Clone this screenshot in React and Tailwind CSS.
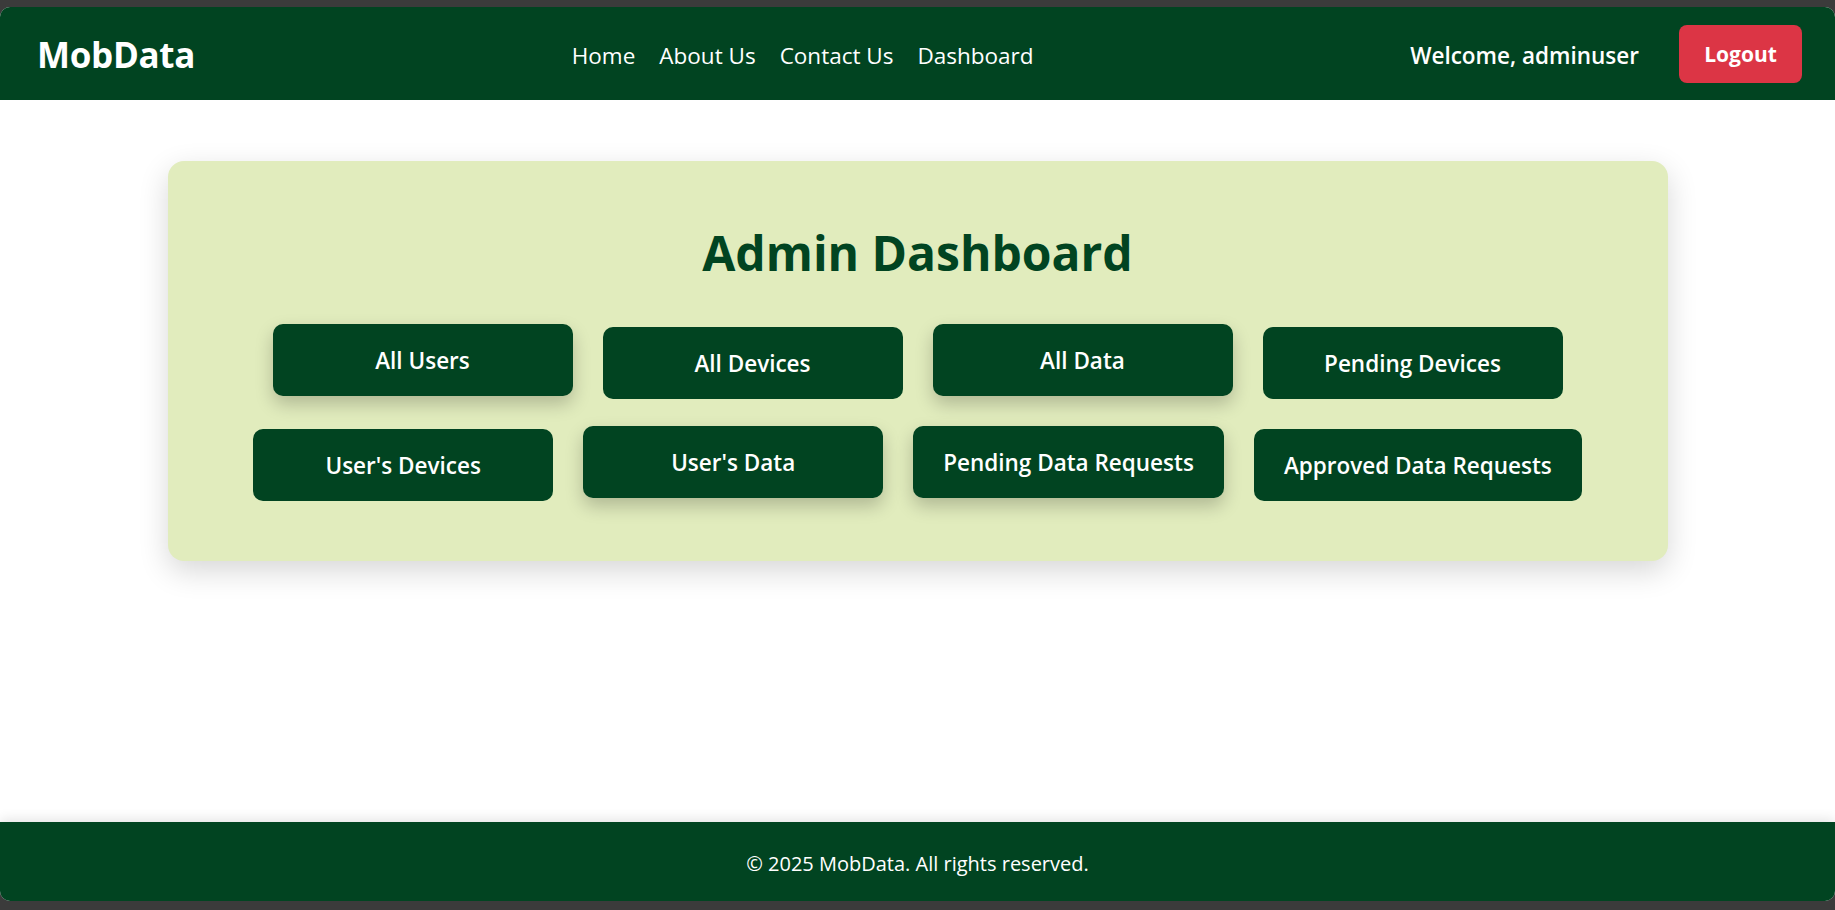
export default function App() {
  const row1 = [
    { t: "All Users", up: true },
    { t: "All Devices", up: false },
    { t: "All Data", up: true },
    { t: "Pending Devices", up: false },
  ];
  const row2 = [
    { t: "User's Devices", up: false },
    { t: "User's Data", up: true },
    { t: "Pending Data Requests", up: true },
    { t: "Approved Data Requests", up: false },
  ];
  const font = { fontFamily: '"Open Sans", "Noto Sans", sans-serif' };
  const Btn = ({ t, up }) => (
    <button
      className={
        "min-w-[300px] h-[72px] px-[30px] pt-[2px] rounded-[10px] bg-[#014421] text-white text-[22.5px] font-semibold flex items-center justify-center " +
        (up ? "-translate-y-[3px] shadow-[0_8px_18px_rgba(0,0,0,0.22)]" : "")
      }
    >
      {t}
    </button>
  );
  return (
    <div className="h-[910px] bg-[#3b3b3b] pt-[7px] pb-[9px] flex flex-col" style={font}>
      <div className="flex-1 flex flex-col bg-white rounded-[10px] overflow-hidden">
        <header className="h-[93px] shrink-0 bg-[#014421] flex items-center justify-between pl-[37px] pr-[33px]">
          <div className="text-white text-[35px] font-bold tracking-[-0.3px] pt-[4px]">MobData</div>
          <nav className="flex items-center gap-[24px] text-white text-[22.5px] pt-[4px]">
            <a>Home</a>
            <a>About Us</a>
            <a>Contact Us</a>
            <a>Dashboard</a>
          </nav>
          <div className="flex items-center gap-[40px]">
            <span className="text-white text-[22.5px] font-semibold pt-[4px]">Welcome, adminuser</span>
            <button className="w-[123px] h-[58px] pt-[2px] rounded-[8px] bg-[#dc3545] text-white text-[21px] font-bold">
              Logout
            </button>
          </div>
        </header>
        <main className="flex-1 pt-[61px]">
          <div className="mx-auto w-[1500px] bg-[#e1ecbd] rounded-[16px] shadow-[0_10px_30px_rgba(0,0,0,0.16)] px-[40px] pt-[63px] pb-[60px]">
            <h1 className="text-center text-[48px] font-bold text-[#014421] leading-[1.2] mb-[45px]">
              Admin Dashboard
            </h1>
            <div className="flex flex-col items-center gap-[30px]">
              <div className="flex justify-center gap-[30px]">
                {row1.map((b) => (
                  <Btn key={b.t} {...b} />
                ))}
              </div>
              <div className="flex justify-center gap-[30px]">
                {row2.map((b) => (
                  <Btn key={b.t} {...b} />
                ))}
              </div>
            </div>
          </div>
        </main>
        <footer className="h-[79px] shrink-0 pt-[4px] bg-[#014421] flex items-center justify-center text-white text-[20px] shadow-[0_-2px_12px_rgba(0,0,0,0.12)]">
          © 2025 MobData. All rights reserved.
        </footer>
      </div>
    </div>
  );
}
